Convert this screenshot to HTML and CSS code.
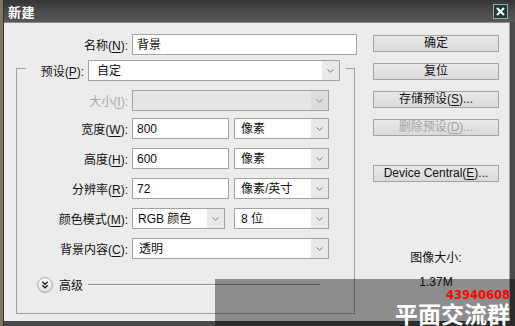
FILE: index.html
```html
<!DOCTYPE html>
<html lang="zh-CN">

<head>
    <meta charset="UTF-8">
    <title>新建</title>
    <link rel="stylesheet" href="styles.css">
</head>

<body>
    <div class="window">
        <div class="titlebar">
            <span class="title">新建</span>
            <div class="close">
                <svg viewBox="0 0 15 15">
                    <path d="M3.5,3.5 L11.5,11.5 M11.5,3.5 L3.5,11.5" stroke="#fff" stroke-width="2.4" fill="none"></path>
                </svg>
            </div>
        </div>

        <div class="dialog">
            <div class="form">
                <div class="row name-row">
                    <span class="label">名称(<u>N</u>):</span>
                    <div class="input name-input">背景</div>
                </div>

                <fieldset class="group">
                    <legend class="preset">
                        <span class="label">预设(<u>P</u>):</span>
                        <div class="select preset-select">
                            <span class="value">自定</span>
                            <span class="arrow"><svg viewBox="0 0 7 4"><path d="M0.5,0.5 L3.5,3.2 6.5,0.5" stroke="#7a7a7a" fill="none"></path></svg></span>
                        </div>
                    </legend>

                    <div class="row size-row">
                        <span class="label disabled">大小(<u>I</u>):</span>
                        <div class="select full off">
                            <span class="value"></span>
                            <span class="arrow"><svg viewBox="0 0 7 4"><path d="M0.5,0.5 L3.5,3.2 6.5,0.5" stroke="#8a8a8a" fill="none"></path></svg></span>
                        </div>
                    </div>

                    <div class="row">
                        <span class="label">宽度(<u>W</u>):</span>
                        <div class="input num">800</div>
                        <div class="select unit">
                            <span class="value">像素</span>
                            <span class="arrow"><svg viewBox="0 0 7 4"><path d="M0.5,0.5 L3.5,3.2 6.5,0.5" stroke="#7a7a7a" fill="none"></path></svg></span>
                        </div>
                    </div>

                    <div class="row">
                        <span class="label">高度(<u>H</u>):</span>
                        <div class="input num">600</div>
                        <div class="select unit">
                            <span class="value">像素</span>
                            <span class="arrow"><svg viewBox="0 0 7 4"><path d="M0.5,0.5 L3.5,3.2 6.5,0.5" stroke="#7a7a7a" fill="none"></path></svg></span>
                        </div>
                    </div>

                    <div class="row">
                        <span class="label">分辨率(<u>R</u>):</span>
                        <div class="input num">72</div>
                        <div class="select unit">
                            <span class="value">像素/英寸</span>
                            <span class="arrow"><svg viewBox="0 0 7 4"><path d="M0.5,0.5 L3.5,3.2 6.5,0.5" stroke="#7a7a7a" fill="none"></path></svg></span>
                        </div>
                    </div>

                    <div class="row">
                        <span class="label">颜色模式(<u>M</u>):</span>
                        <div class="select mode">
                            <span class="value">RGB 颜色</span>
                            <span class="arrow"><svg viewBox="0 0 7 4"><path d="M0.5,0.5 L3.5,3.2 6.5,0.5" stroke="#7a7a7a" fill="none"></path></svg></span>
                        </div>
                        <div class="select unit bits">
                            <span class="value">8 位</span>
                            <span class="arrow"><svg viewBox="0 0 7 4"><path d="M0.5,0.5 L3.5,3.2 6.5,0.5" stroke="#7a7a7a" fill="none"></path></svg></span>
                        </div>
                    </div>

                    <div class="row">
                        <span class="label">背景内容(<u>C</u>):</span>
                        <div class="select full">
                            <span class="value">透明</span>
                            <span class="arrow"><svg viewBox="0 0 7 4"><path d="M0.5,0.5 L3.5,3.2 6.5,0.5" stroke="#7a7a7a" fill="none"></path></svg></span>
                        </div>
                    </div>

                    <div class="advanced">
                        <svg class="toggle" viewBox="0 0 16 16">
                            <defs>
                                <linearGradient id="knob" x1="0" y1="0" x2="0" y2="1">
                                    <stop offset="0" stop-color="#ffffff"></stop>
                                    <stop offset="1" stop-color="#dcdcdc"></stop>
                                </linearGradient>
                            </defs>
                            <circle cx="8" cy="8" r="7.4" fill="url(#knob)" stroke="#9a9a9a" stroke-width="0.9"></circle>
                            <path d="M5.3,4.8 L8,7.2 10.7,4.8 M5.3,8.3 L8,10.7 10.7,8.3" stroke="#222" stroke-width="1.4" fill="none"></path>
                        </svg>
                        <span class="adv-text">高级</span>
                        <span class="rule"></span>
                    </div>
                </fieldset>
            </div>

            <div class="side">
                <div class="button">确定</div>
                <div class="button">复位</div>
                <div class="button">存储预设(<u>S</u>)...</div>
                <div class="button disabled">删除预设(<u>D</u>)...</div>
                <div class="button device">Device Central(<u>E</u>)...</div>
                <div class="info">图像大小:</div>
                <div class="info size">1.37M</div>
            </div>
        </div>

        <div class="watermark">
            <span class="qq">43940608</span>
            <span class="group-name">平面交流群</span>
        </div>
    </div>
</body>

</html>
```

FILE: styles.css
```css
* {
    box-sizing: border-box;
    font-family: "Liberation Sans", "Noto Sans CJK SC", sans-serif;
}

html,
body {
    width: 515px;
    height: 326px;
    margin: 0;
    padding: 0;
    overflow: hidden;
    background: #7f7565;
}

u {
    text-decoration: underline;
    text-underline-offset: 2px;
}

.window {
    position: relative;
    margin-left: 3px;
    height: 326px;
    border-left: 1px solid #2e2e2e;
    background: #4a4a4a;
}

.titlebar {
    display: flex;
    align-items: center;
    justify-content: space-between;
    height: 22px;
    padding: 0 7px 0 4px;
    background: linear-gradient(#353535, #4d4d4d 60%, #565656);
}

.title {
    color: #fff;
    font-size: 13px;
    font-weight: 700;
    letter-spacing: 0.5px;
}

.close {
    width: 15px;
    height: 15px;
    border: 1px solid #9aa7a4;
    background: #1e3c37;
}

.close svg {
    display: block;
    width: 13px;
    height: 13px;
}

.dialog {
    display: flex;
    height: 299px;
    margin-right: 5px;
    padding-top: 11px;
    background: #ececec;
    border-top: 1px solid #8c8c8c;
    border-right: 1px solid #a2a2a2;
}

.form {
    width: 353px;
}

.row {
    display: flex;
    align-items: center;
    height: 21px;
    margin-bottom: 9px;
    font-size: 12px;
}

.label {
    flex: none;
    width: 111px;
    margin-right: 4px;
    text-align: right;
    font-size: 12px;
    color: #111;
}

.name-row {
    margin-bottom: 0;
}

.name-row .label {
    width: 124px;
}

.label.disabled {
    color: #a8a8a8;
}

.input {
    height: 21px;
    padding: 2px 4px 0;
    border: 1px solid #a2a2a2;
    background: #fff;
    font-size: 12px;
    line-height: 16px;
    color: #111;
}

.name-input {
    width: 225px;
}

.num {
    width: 97px;
    margin-right: 5px;
}

.select {
    display: flex;
    height: 21px;
    border: 1px solid #a2a2a2;
    background: #fff;
    font-size: 12px;
    color: #111;
}

.select .value {
    flex: 1;
    padding: 2px 0 0 6px;
    line-height: 16px;
    white-space: nowrap;
}

.select .arrow {
    display: flex;
    align-items: center;
    justify-content: center;
    width: 17px;
    background: #e9e9e9;
}

.select .arrow svg {
    width: 7px;
    height: 4px;
}

.select.off {
    background: #e6e6e6;
}

.select.off .arrow {
    background: #dddddd;
}

.full {
    width: 197px;
}

.unit {
    width: 95px;
}

.mode {
    width: 93px;
}

.mode .value {
    padding-left: 5px;
}

.bits {
    margin-left: 9px;
}

.group {
    width: 339px;
    margin: 1px 0 0 12px;
    padding: 9px 0 20px;
    border: 1px solid #a0a0a0;
}

.preset {
    display: flex;
    align-items: center;
    margin-left: 9px;
    padding: 4px 6px 0 12px;
}

.preset .label {
    width: 46px;
}

.preset-select {
    width: 252px;
}

.preset-select .value {
    padding-left: 8px;
}

.size-row {
    margin-bottom: 7px;
}

.advanced {
    display: flex;
    align-items: center;
    height: 17px;
    margin: 17px 0 0 20px;
}

.toggle {
    width: 16px;
    height: 16px;
}

.adv-text {
    margin-left: 6px;
    font-size: 12px;
    color: #111;
}

.rule {
    width: 232px;
    height: 2px;
    margin-left: 5px;
    border-top: 1px solid #8e8e8e;
    border-bottom: 1px solid #fafafa;
}

.side {
    display: flex;
    flex-direction: column;
    align-items: center;
    width: 126px;
    margin-left: 16px;
    padding-top: 1px;
}

.button {
    width: 126px;
    height: 17px;
    margin-bottom: 11px;
    border: 1px solid #a4a4a4;
    background: linear-gradient(#e9e9e9, #dadada);
    font-size: 12px;
    line-height: 15px;
    text-align: center;
    color: #111;
}

.button.disabled {
    color: #a4a4a4;
}

.button.device {
    margin-top: 18px;
}

.info {
    margin-top: 57px;
    font-size: 12px;
    line-height: 16px;
    color: #111;
}

.info.size {
    margin-top: 8px;
}

.watermark {
    position: absolute;
    left: 211px;
    top: 279px;
    right: 0;
    bottom: 0;
    display: flex;
    flex-direction: column;
    align-items: flex-end;
    padding: 10px 5px 0 0;
    background: rgba(0, 0, 0, 0.4);
}

.qq {
    font-family: "DejaVu Sans", sans-serif;
    font-size: 11.5px;
    font-weight: 700;
    line-height: 12px;
    color: #ff0000;
}

.group-name {
    font-family: "Noto Sans CJK SC", sans-serif;
    font-size: 23px;
    font-weight: 700;
    line-height: 25px;
    color: #fff;
}
```
